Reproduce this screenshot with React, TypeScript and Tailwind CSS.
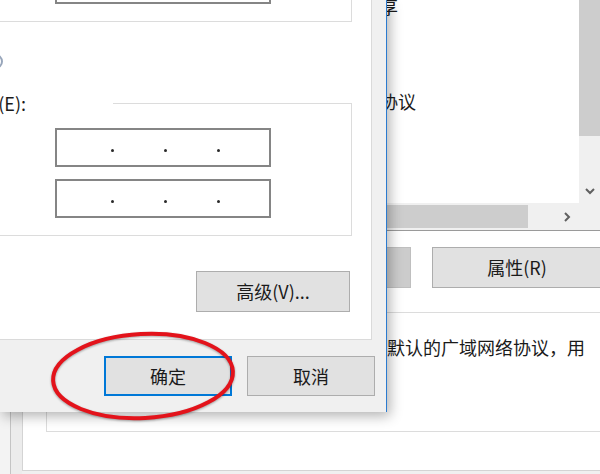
import React from "react";

const listRows = [
  { text: "Microsoft 网络的文件和打印机共享", width: "w-[351px]" },
  { text: "QoS 数据包计划程序", width: "w-[300px]" },
  { text: "Internet 协议版本 4 (TCP/IPv4)", width: "w-[330px]" },
  { text: "Microsoft 网络适配器多路传送器协议", width: "w-[369px]" },
  { text: "Microsoft LLDP 协议驱动程序", width: "w-[330px]" },
  { text: "Internet 协议版本 6 (TCP/IPv6)", width: "w-[330px]" },
];

const IpBox = () => (
  <div className="ml-[55px] flex h-[39px] w-[216px] border-2 border-[#858585] bg-white">
    <div className="flex items-center gap-[50px] pl-[54px] pt-[6px]">
      <span className="h-[3px] w-[3px] rounded-full bg-[#2a2a2a]" />
      <span className="h-[3px] w-[3px] rounded-full bg-[#2a2a2a]" />
      <span className="h-[3px] w-[3px] rounded-full bg-[#2a2a2a]" />
    </div>
  </div>
);

const BackWindow = () => (
  <div className="flex h-full">
    <div className="flex w-[22px] shrink-0">
      <div className="w-[10px] bg-[#f3f3f3]" />
      <div className="w-[12px] border-l border-[#c4c4c4] bg-[#ececec]" />
    </div>
    <div className="h-[471px] w-[578px] shrink-0 overflow-hidden border-b border-l border-[#d4d4d4] bg-white pl-[23px]">
      <div className="w-[600px]">
        {/* component list */}
        <div className="-mt-[9px] w-[556px] border-x border-b border-[#9a9a9a]">
          <div className="flex h-[212px]">
            <div className="flex-1 bg-white">
              {listRows.map((row) => (
                <div key={row.text} className={`flex h-[31.5px] items-center justify-end ${row.width}`}>
                  <span className="shrink-0 whitespace-nowrap">{row.text}</span>
                </div>
              ))}
            </div>
            <div className="flex w-[22px] flex-col bg-[#f0f0f0]">
              <div className="h-[145px] bg-[#cdcdcd]" />
              <div className="flex-1" />
              <div className="flex h-[24px] items-center justify-center">
                <svg width="10" height="7" viewBox="0 0 10 7">
                  <polyline points="1,1 5,5 9,1" fill="none" stroke="#606060" strokeWidth="2" />
                </svg>
              </div>
            </div>
          </div>
          <div className="flex h-[27px] bg-[#f0f0f0] py-[2px]">
            <div className="w-[481px] bg-[#cdcdcd]" />
            <div className="flex flex-1 items-center justify-end pr-[8px]">
              <svg width="7" height="10" viewBox="0 0 7 10">
                <polyline points="1,1 5,5 1,9" fill="none" stroke="#606060" strokeWidth="2" />
              </svg>
            </div>
            <div className="w-[22px]" />
          </div>
        </div>

        {/* buttons */}
        <div className="mt-[16px] flex h-[41px] gap-[21px]">
          <div className="flex w-[174px] items-center justify-center border border-[#adadad] bg-[#e1e1e1]">
            安装(N)...
          </div>
          <div className="flex w-[170px] items-center justify-center border border-[#bfbfbf] bg-[#cccccc] text-[#838383]">
            卸载(U)
          </div>
          <div className="flex w-[170px] items-center justify-center border border-[#adadad] bg-[#e1e1e1]">
            属性(R)
          </div>
        </div>

        {/* description */}
        <div className="mt-[24px] h-[120px] w-[560px] border border-[#dcdcdc] pt-[22px]">
          <div className="flex w-[538px] justify-end leading-[24px]">
            <span className="shrink-0 whitespace-nowrap">
              传输控制协议/Internet 协议。该协议是默认的广域网络协议，用
            </span>
          </div>
          <div className="pl-[13px] leading-[27px]">于在不同的相互连接的网络上通信。</div>
        </div>
      </div>
    </div>
  </div>
);

const FrontDialog = () => (
  <div className="absolute left-0 top-0 flex h-[412px] w-[387px] flex-col border-r border-[#2b7bd0] bg-[#f0f0f0] shadow-[3px_4px_12px_rgba(0,0,0,0.3)]">
    <div className="flex h-[340px] w-[372px] shrink-0 flex-col overflow-hidden border-b border-r border-[#dadada] bg-white">
      {/* IP address group, bottom edge */}
      <div className="flex h-[22px] w-[352px] shrink-0 flex-col border-b border-r border-[#dcdcdc]">
        <div className="-mt-[36px] ml-[55px] h-[40px] w-[216px] shrink-0 border-2 border-[#858585]" />
      </div>

      <div className="-ml-[12px] mt-[32px] h-[15px] w-[15px] shrink-0 rounded-full border-2 border-[#98a6bb]" />

      {/* DNS group */}
      <div className="mt-[34px] flex h-[133px] w-[352px] shrink-0 flex-col border-y border-r border-[#dcdcdc]">
        <div className="-mt-[13px] flex h-[24px] w-[113px] shrink-0 bg-white">
          <div className="flex w-[26px] justify-end">
            <span className="shrink-0 whitespace-nowrap leading-[24px]">使用下面的 DNS 服务器地址(E):</span>
          </div>
        </div>
        <div className="mt-[13px] flex flex-col gap-[12px]">
          <IpBox />
          <IpBox />
        </div>
      </div>

      <div className="ml-[196px] mt-[35px] flex h-[41px] w-[154px] shrink-0 items-center justify-center border border-[#adadad] bg-[#e1e1e1]">
        高级(V)...
      </div>
    </div>

    <div className="flex gap-[15px] pl-[104px] pt-[16px]">
      <div className="flex h-[40px] w-[128px] items-center justify-center border-2 border-[#0078d7] bg-[#e1e1e1]">
        确定
      </div>
      <div className="flex h-[40px] w-[128px] items-center justify-center border border-[#adadad] bg-[#e1e1e1]">
        取消
      </div>
    </div>
  </div>
);

export default function App() {
  return (
    <div className="relative h-[474px] w-[600px] overflow-hidden bg-[#f0f0f0] font-['Noto_Sans_CJK_SC','Noto_Sans',sans-serif] text-[18px] text-[#1a1a1a]">
      <BackWindow />
      <FrontDialog />
      <svg
        className="pointer-events-none absolute left-0 top-0 drop-shadow-[0_1px_1px_rgba(0,0,0,0.35)]"
        width="600"
        height="474"
        viewBox="0 0 600 474"
      >
        <ellipse
          cx="143"
          cy="376"
          rx="90"
          ry="42"
          transform="rotate(-3 143 376)"
          fill="none"
          stroke="#e3131b"
          strokeWidth="4"
        />
      </svg>
    </div>
  );
}
